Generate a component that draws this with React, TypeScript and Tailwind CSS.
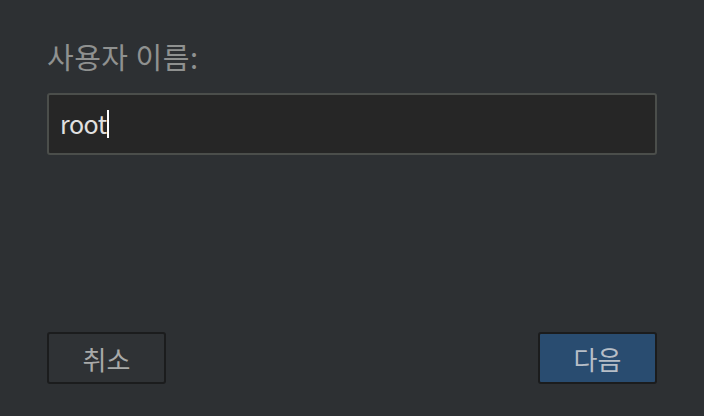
import React from 'react';

const App: React.FC = () => {
  return (
    <div
      className="w-[704px] h-[416px] bg-[#2d3033] flex flex-col px-[47px] pt-[38px] pb-[32px]"
      style={{ fontFamily: '"Noto Sans CJK KR", "Noto Sans", sans-serif' }}
    >
      {/* Username */}
      <label className="text-[29px] leading-[36px] text-[#8f9190] tracking-[0.5px]">사용자 이름:</label>
      <div className="mt-[19px] h-[62px] w-[610px] border-2 border-[#4b4e4b] bg-[#262626] rounded-[3px] flex items-center px-[11px]">
        <span className="text-[25px] text-[#e0e0e0] tracking-[-0.5px]">root</span>
        <span className="w-[2px] h-[28px] bg-white" />
      </div>

      {/* Buttons */}
      <div className="mt-auto flex justify-between">
        <button className="w-[119px] h-[52px] rounded-[3px] border-2 border-[#1b1c1d] bg-[#2f3235] text-[26px] text-[#a9aaa9]">
          취소
        </button>
        <button className="w-[119px] h-[52px] rounded-[3px] border-2 border-[#1b1c1d] bg-[#294c70] text-[26px] text-[#b7bec7]">
          다음
        </button>
      </div>
    </div>
  );
};

export default App;
